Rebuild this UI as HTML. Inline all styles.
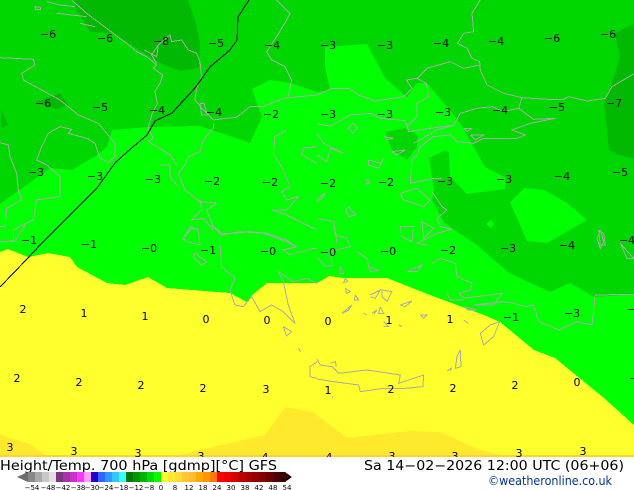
<!DOCTYPE html>
<html><head><meta charset="utf-8"><style>
html,body{margin:0;padding:0;background:#fff;width:634px;height:490px;overflow:hidden}
svg{display:block}
.l text{font:11px "DejaVu Sans",sans-serif;fill:#000;text-anchor:middle}
.c polyline{fill:none;stroke:#aaa;stroke-width:3}
</style></head><body>
<svg width="634" height="490" viewBox="0 0 634 490" xmlns="http://www.w3.org/2000/svg">
<defs><clipPath id="m"><rect width="634" height="457"/></clipPath></defs>
<g clip-path="url(#m)">
<rect width="634" height="457" fill="#00d700"/>
<!-- dark patches -->
<g fill="#00b900" shape-rendering="crispEdges">
<polygon points="73,0 188,0 195,20 200,43 199,68 180,71 160,63 147,55 113,33 90,32 77,10"/>
<polygon points="35,103 60,93 68,105 57,109"/>
<polygon points="1,108 8,125 1,128"/>
<polygon points="615,33 634,24 634,159 619,155 609,150 604,103 612,83 620,57"/>
</g>
<!-- bright green -->
<polygon shape-rendering="crispEdges" fill="#00ff00" points="0,204 18,191 50,168 72,170 97,155 107,147 112,130 150,127 200,126 250,143 262,117 252,89 270,80 290,83 317,92 330,90 325,67 325,47 367,44 385,78 407,97 417,83 427,83 460,123 485,167 505,177 505,189 467,194 450,177 449,152 444,151 429,158 434,190 432,200 444,223 477,245 509,273 550,292 570,283 594,297 634,294 634,457 0,457"/>
<polygon shape-rendering="crispEdges" fill="#00d700" points="385,132 405,128 418,135 417,147 407,160 392,150"/>
<polygon shape-rendering="crispEdges" fill="#00ff00" points="510,202 524,188 544,190 567,203 587,220 547,243 527,241"/>
<polygon shape-rendering="crispEdges" fill="#00ff00" points="486,224 490,220 494,224 490,228"/>
<!-- yellow -->
<polygon shape-rendering="crispEdges" fill="#ffff2d" points="0,252 8,249 28,257 48,253 70,257 77,267 107,283 125,285 148,277 167,288 230,293 247,302 252,295 267,283 317,283 329,276 344,278 387,278 430,295 484,315 500,322 534,350 555,358 604,398 634,425 634,457 0,457"/>
<g fill="#ffe92d" shape-rendering="crispEdges">
<polygon points="0,434 10,438 30,444 48,457 0,457"/>
<polygon points="173,457 200,450 265,435 285,407 313,412 317,415 347,438 410,431 440,432 480,450 510,457"/>
<rect y="455" width="634" height="2" fill="#ffd22d"/>
</g>
<!-- coast -->
<g class="c" shape-rendering="crispEdges">
<g transform="scale(.3333)">
<polyline points="215,0 260,40 300,70 340,100 380,130 410,155 440,170 470,195 460,205 488,225 480,250 465,275 472,310 455,345 445,385 460,415 445,425 480,445 510,465 530,495"/>
<polyline points="140,5 180,15 225,20"/><polyline points="170,40 215,45 260,50"/><polyline points="240,70 285,80"/><polyline points="105,20 122,22 122,28 107,28 105,20"/>
<polyline points="0,173 100,178 105,195 65,220 70,240 125,270 180,300 235,345 295,370 345,430 345,470 325,487 300,475 285,430 260,415 205,400 215,388 180,380 145,400 125,440 110,480 140,495 180,530 180,590 110,600 100,660 40,690 40,725 0,725"/>
<polyline points="0,428 25,435 30,470 50,520 55,570 65,600 20,625 15,680 0,680"/>
<polyline points="475,135 510,105 515,125 545,120 565,150 590,160 600,185 605,230 590,265 585,300 610,330 640,360 680,355 710,352 750,320 790,320 850,295 951,285"/>
<polyline points="830,0 870,40 860,60 830,110 800,155 815,180 855,200 875,240 865,290"/>
<polyline points="433,150 470,170 475,135 455,165 470,190"/><polyline points="600,310 612,310 622,345 605,345 600,310"/>
<polyline points="640,370 640,385 610,420 600,455 565,470 555,495 535,520 555,570 600,605 650,610 620,630 640,680 665,700 700,700 745,695 800,700 860,720 880,735"/>
<polyline points="860,390 825,410 820,460 850,510 870,560 845,575 860,600 895,590 860,630 815,630 850,640 930,680 951,690"/>
<polyline points="951,440 910,445 905,465 951,490"/>
<polyline points="480,495 510,495 510,530 530,555"/>
<polyline points="600,600 605,630 575,660 610,655 640,690"/><polyline points="548,720 570,680 595,690 600,735"/>
</g>
<g transform="translate(317,0) scale(.3333)">
<polyline points="490,0 465,40 470,95 440,100 422,130 450,145 465,175 488,185 490,210 510,255 560,280 615,293 690,298 740,298 755,290 810,303 865,295 885,260 950,222"/>
<polyline points="490,195 440,205 400,185 330,205 300,235 328,250 335,290 300,310 300,350 270,380 275,395 340,385 410,375 430,340 480,325 525,320 560,335 605,325 615,293"/>
<polyline points="0,285 45,265 95,265 125,285 175,303 260,290 285,265 268,240 300,235"/>
<polyline points="0,372 40,378 100,345 160,340 190,355 265,362 275,390"/>
<polyline points="605,325 650,358 715,355 640,370 585,390 625,405 600,415 500,415 470,430 420,425 400,405 350,410 310,440 300,465 285,480 280,550 350,535 375,535"/>
<polyline points="345,575 375,620 390,630 360,655 370,680 405,688 360,700 300,730 330,735"/>
<polyline points="290,430 360,390 410,375"/>
<polyline points="108,368 122,385 108,400 94,385 108,368"/>
<polyline points="155,480 190,490 200,475 185,505 155,495 155,480"/>
<polyline points="145,545 152,538 158,548 150,553 145,545"/>
<polyline points="250,580 300,565 340,600 320,620 260,600 250,580"/>
<polyline points="85,630 95,620 115,645 95,650 85,630"/>
<polyline points="0,655 50,665 60,730"/>
<polyline points="250,680 290,680 285,725 255,710 250,680"/>
<polyline points="315,665 350,685 320,715 315,665"/>
<polyline points="440,385 465,385 450,395 440,385"/><polyline points="460,405 500,405 475,420 460,405"/>
<polyline points="225,455 265,450 240,465 225,455"/><polyline points="200,410 230,415 205,420"/>
<polyline points="0,400 20,430 80,460 40,445 30,485 0,465"/>
<polyline points="845,690 860,700 865,735 850,735 845,690"/>
<polyline points="0,600 25,578 15,595 0,605"/>
</g>
<g transform="translate(0,225) scale(.3333)">
<polyline points="0,50 45,48 75,0"/>
<polyline points="550,40 575,10 595,15 600,60 560,50 550,40"/>
<polyline points="585,85 620,110 605,120 580,95 585,85"/>
<polyline points="635,0 665,30 720,20 790,25 860,50 890,65 850,75 870,90 940,70 951,70"/>
<polyline points="660,60 665,125 705,160 690,195 705,240 730,245 755,215 780,260 815,240 850,260 885,295 865,240 850,170 835,140 880,170 920,160 951,175"/>
<polyline points="850,305 875,320 860,333 850,305"/><polyline points="895,370 902,380"/>
<polyline points="951,410 930,425 930,455 951,460"/>
</g>
<g transform="translate(317,225) scale(.3333)">
<polyline points="0,95 25,125 45,120 40,80 100,65 90,40 55,30 50,0"/>
<polyline points="120,80 150,100 155,125 185,135 160,140 155,125"/>
<polyline points="70,125 80,145 68,145 70,125"/><polyline points="85,160 92,170 80,172 85,160"/><polyline points="85,190 100,200 88,205 85,190"/><polyline points="115,210 125,225 112,225 115,210"/>
<polyline points="160,210 190,195 175,220 160,215"/><polyline points="195,195 225,200 210,230 195,215 195,195"/>
<polyline points="75,265 105,240 95,255 75,265"/><polyline points="140,265 150,270"/><polyline points="165,265 180,255 170,268"/><polyline points="190,245 200,265 185,265 190,245"/>
<polyline points="310,270 330,270 320,280 310,270"/><polyline points="200,290 215,305 200,305"/><polyline points="250,240 285,228 265,245 250,240"/><polyline points="245,300 255,305"/><polyline points="440,285 455,295"/>
<polyline points="270,140 315,120 300,140 270,140"/>
<polyline points="345,115 370,100 415,115 420,155 465,175 460,195 425,205 440,220 555,205 530,240 470,240 560,230 590,235 625,245 650,240 665,290 725,315 780,290 825,300 835,210 950,208"/>
<polyline points="390,205 400,225 440,225"/><polyline points="450,255 480,255 445,245 450,255"/>
<polyline points="548,290 530,335 500,360 490,325 520,300 548,290"/>
<polyline points="430,375 432,425 415,430 420,395 430,375"/><polyline points="390,438 405,428 398,438"/>
<polyline points="0,402 10,420 45,425 65,445 150,435 250,450 245,475 320,450 318,485 265,490 200,490 130,500 125,480 50,470 0,462"/>
<polyline points="40,415 55,410 58,425"/><polyline points="45,515 48,520"/>
<polyline points="850,15 860,50 850,70 840,40 850,15"/><polyline points="910,55 950,100 930,100 910,55"/>
</g>
</g>
<polyline fill="none" stroke="#000" stroke-width="1" shape-rendering="crispEdges" points="249,0 238,17 237,40 230,50 210,67 195,88 172,113 155,121 147,135 127,152 115,163 97,188 77,208 40,245 28,258 0,287"/>
<!-- labels -->
<g class="l">
<text x="48" y="38">−6</text><text x="105" y="42">−6</text><text x="161" y="45">−8</text><text x="216" y="47">−5</text><text x="272" y="49">−4</text><text x="328" y="49">−3</text><text x="385" y="49">−3</text><text x="441" y="47">−4</text><text x="496" y="45">−4</text><text x="552" y="42">−6</text><text x="608" y="38">−6</text>
<text x="43" y="107">−6</text><text x="100" y="111">−5</text><text x="157" y="114">−4</text><text x="214" y="116">−4</text><text x="271" y="118">−2</text><text x="328" y="118">−3</text><text x="385" y="118">−3</text><text x="443" y="116">−3</text><text x="500" y="114">−4</text><text x="557" y="111">−5</text><text x="614" y="107">−7</text>
<text x="36" y="176">−3</text><text x="95" y="180">−3</text><text x="153" y="183">−3</text><text x="212" y="185">−2</text><text x="270" y="186">−2</text><text x="328" y="187">−2</text><text x="386" y="186">−2</text><text x="445" y="185">−3</text><text x="504" y="183">−3</text><text x="562" y="180">−4</text><text x="620" y="176">−5</text>
<text x="29" y="244">−1</text><text x="89" y="248">−1</text><text x="149" y="252">−0</text><text x="208" y="254">−1</text><text x="268" y="255">−0</text><text x="328" y="256">−0</text><text x="388" y="255">−0</text><text x="448" y="254">−2</text><text x="508" y="252">−3</text><text x="567" y="249">−4</text><text x="627" y="244">−4</text>
<text x="23" y="313">2</text><text x="84" y="317">1</text><text x="145" y="320">1</text><text x="206" y="323">0</text><text x="267" y="324">0</text><text x="328" y="325">0</text><text x="389" y="324">1</text><text x="450" y="323">1</text><text x="511" y="321">−1</text><text x="572" y="317">−3</text><text x="632" y="313">−</text>
<text x="17" y="382">2</text><text x="79" y="386">2</text><text x="141" y="389">2</text><text x="203" y="392">2</text><text x="266" y="393">3</text><text x="328" y="394">1</text><text x="391" y="393">2</text><text x="453" y="392">2</text><text x="515" y="389">2</text><text x="577" y="386">0</text><text x="634" y="382">−</text>
<text x="10" y="451">3</text><text x="74" y="455">3</text><text x="138" y="457">3</text><text x="201" y="460">3</text><text x="265" y="461">4</text><text x="329" y="461">4</text><text x="392" y="460">3</text><text x="455" y="460">3</text><text x="519" y="457">3</text><text x="583" y="455">3</text>
</g>
</g>
<!-- header -->
<text x="0" y="470" font-family="DejaVu Sans,sans-serif" font-size="13" textLength="277" lengthAdjust="spacingAndGlyphs" fill="#000">Height/Temp. 700 hPa [gdmp][°C] GFS</text>
<text x="364" y="470" font-family="DejaVu Sans,sans-serif" font-size="13" textLength="260" lengthAdjust="spacingAndGlyphs" fill="#000">Sa 14−02−2026 12:00 UTC (06+06)</text>
<text x="488" y="485" font-family="DejaVu Sans,sans-serif" font-size="12" textLength="124" lengthAdjust="spacingAndGlyphs" fill="#003399">©weatheronline.co.uk</text>
<!-- colorbar -->
<g shape-rendering="crispEdges">
<polygon points="17,477 28,472 28,482" fill="#6e6e6e"/>
<rect x="28" y="472" width="7" height="10" fill="#888"/><rect x="35" y="472" width="7" height="10" fill="#aaa"/><rect x="42" y="472" width="7" height="10" fill="#c8c8c8"/><rect x="49" y="472" width="7" height="10" fill="#e0e0e0"/>
<rect x="56" y="472" width="7" height="10" fill="#7d3582"/><rect x="63" y="472" width="7" height="10" fill="#a832a8"/><rect x="70" y="472" width="7" height="10" fill="#c832c8"/><rect x="77" y="472" width="7" height="10" fill="#ff32ff"/><rect x="84" y="472" width="7" height="10" fill="#ff9eff"/>
<rect x="91" y="472" width="7" height="10" fill="#2200cc"/><rect x="98" y="472" width="7" height="10" fill="#3264ff"/><rect x="105" y="472" width="7" height="10" fill="#3296ff"/><rect x="112" y="472" width="7" height="10" fill="#32c8ff"/><rect x="119" y="472" width="7" height="10" fill="#32ffff"/>
<rect x="126" y="472" width="7" height="10" fill="#007800"/><rect x="133" y="472" width="7" height="10" fill="#009600"/><rect x="140" y="472" width="7" height="10" fill="#00b400"/><rect x="147" y="472" width="7" height="10" fill="#00dc00"/><rect x="154" y="472" width="7" height="10" fill="#00ff00"/>
<rect x="161" y="472" width="7" height="10" fill="#ffff2d"/><rect x="168" y="472" width="7" height="10" fill="#ffe92d"/><rect x="175" y="472" width="7" height="10" fill="#ffdc32"/><rect x="182" y="472" width="7" height="10" fill="#ffc832"/><rect x="189" y="472" width="7" height="10" fill="#ffbe32"/><rect x="196" y="472" width="7" height="10" fill="#ffaa00"/><rect x="203" y="472" width="7" height="10" fill="#ff9600"/><rect x="210" y="472" width="7" height="10" fill="#ff7800"/>
<rect x="217" y="472" width="7" height="10" fill="#ff0000"/><rect x="224" y="472" width="7" height="10" fill="#f00000"/><rect x="231" y="472" width="7" height="10" fill="#d20000"/><rect x="238" y="472" width="7" height="10" fill="#be0000"/><rect x="245" y="472" width="7" height="10" fill="#aa0000"/><rect x="252" y="472" width="7" height="10" fill="#960000"/><rect x="259" y="472" width="7" height="10" fill="#820000"/><rect x="266" y="472" width="7" height="10" fill="#6e0000"/><rect x="273" y="472" width="7" height="10" fill="#500000"/><rect x="280" y="472" width="5" height="10" fill="#3c0000"/>
<polygon points="285,472 292,477 285,482" fill="#280000"/>
</g>
<g font-family="DejaVu Sans,sans-serif" font-size="7" text-anchor="middle" fill="#000">
<text x="32" y="490">−54</text><text x="48" y="490">−48</text><text x="63" y="490">−42</text><text x="78" y="490">−38</text><text x="92" y="490">−30</text><text x="106" y="490">−24</text><text x="121" y="490">−18</text><text x="136" y="490">−12</text><text x="149" y="490">−8</text><text x="161" y="490">0</text><text x="175" y="490">8</text><text x="189" y="490">12</text><text x="203" y="490">18</text><text x="217" y="490">24</text><text x="231" y="490">30</text><text x="245" y="490">38</text><text x="259" y="490">42</text><text x="273" y="490">48</text><text x="287" y="490">54</text>
</g>
</svg>
</body></html>
